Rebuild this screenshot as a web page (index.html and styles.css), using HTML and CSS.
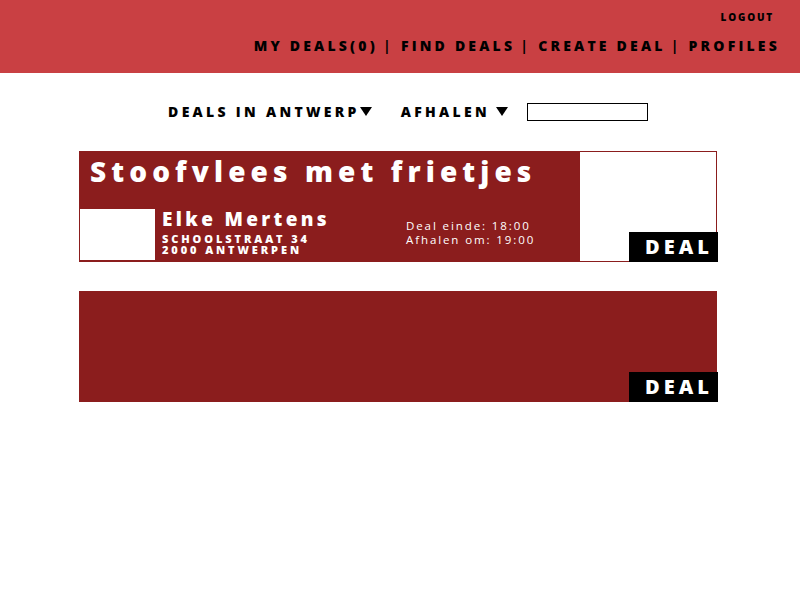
FILE: index.html
```html
<!DOCTYPE html>
<html>
<head>
<meta charset="utf-8">
<link rel="stylesheet" href="styles.css">
</head>
<body>
<header class="topbar">
  <div class="logout">LOGOUT</div>
  <nav class="mainnav">
    <span>MY DEALS(0)</span><span class="sep">|</span><span>FIND DEALS</span><span class="sep">|</span><span>CREATE DEAL</span><span class="sep">|</span><span>PROFILES</span>
  </nav>
</header>
<main class="content">
  <div class="filters">
    <div class="filter">DEALS IN ANTWERP<span class="tri"></span></div>
    <div class="filter f2">AFHALEN<span class="tri tri-gap"></span></div>
    <input class="search" type="text">
  </div>
  <div class="card">
    <div class="card-main">
      <h1 class="title">Stoofvlees met frietjes</h1>
      <div class="card-bottom">
        <div class="avatar"></div>
        <div class="person">
          <div class="name">Elke Mertens</div>
          <div class="addr">SCHOOLSTRAAT 34</div>
          <div class="addr">2000 ANTWERPEN</div>
        </div>
        <div class="times">Deal einde: 18:00<br>Afhalen om: 19:00</div>
      </div>
    </div>
    <div class="card-img"></div>
    <div class="badge">DEAL</div>
  </div>
  <div class="card card-empty">
    <div class="badge">DEAL</div>
  </div>
</main>
</body>
</html>
```
FILE: styles.css
```css
* { box-sizing: border-box; }
body { margin: 0; font-family: "Open Sans", "Lato", sans-serif; background: #fff; color: #000; }
.topbar { background: #c94043; height: 73px; padding: 11px 20px 0 0; display: flex; flex-direction: column; align-items: flex-end; }
.logout { font-size: 10px; font-weight: 800; letter-spacing: 1.8px; margin-right: 6px; line-height: 12px; }
.mainnav { margin-top: 14px; font-size: 14px; font-weight: 800; letter-spacing: 3.2px; line-height: 18px; display: flex; }
.mainnav .sep { margin: 0 7px 0 5px; font-weight: 700; }
.content { width: 638px; margin: 0 0 0 79px; padding-top: 29px; }
.filters { display: flex; justify-content: center; align-items: center; height: 19px; padding-left: 20px; }
.filter { font-size: 14px; font-weight: 800; letter-spacing: 3.3px; display: flex; align-items: center; line-height: 18px; }
.f2 { margin-left: 29px; }
.tri { display: inline-block; width: 0; height: 0; border-left: 6.5px solid transparent; border-right: 6.5px solid transparent; border-top: 9px solid #000; }
.tri-gap { margin-left: 6px; }
.search { width: 121px; height: 18px; border: 1px solid #000; margin-left: 19px; padding: 0; }
.card { position: relative; margin-top: 30px; height: 111px; border: 1px solid #8b1d1d; display: flex; background: #fff; }
.card-main { width: 500px; background: #8b1d1d; display: flex; flex-direction: column; }
.title { margin: 0; color: #fff; font-size: 28px; font-weight: 800; letter-spacing: 5.1px; padding: 0 0 0 10px; height: 57px; line-height: 38px; }
.card-bottom { display: flex; flex: 1; }
.avatar { width: 75px; height: 51px; background: #fff; }
.person { color: #fff; padding: 0 0 0 7px; width: 251px; }
.name { font-size: 19px; font-weight: 800; letter-spacing: 3.35px; line-height: 22px; margin-top: -1px; }
.addr { font-size: 11px; font-weight: 800; letter-spacing: 2.9px; line-height: 11px; }
.name + .addr { margin-top: 3px; }
.times { color: #fff; font-size: 11.5px; letter-spacing: 1.9px; line-height: 14px; padding-top: 10px; }
.card-img { flex: 1; background: #fff; }
.card-empty { background: #8b1d1d; margin-top: 29px; border: none; height: 111px; }
.badge { position: absolute; right: -2px; bottom: -1px; width: 89px; height: 30px; background: #000; color: #fff; font-size: 20px; font-weight: 800; letter-spacing: 4px; line-height: 30px; padding-left: 16px; }
.card-empty .badge { bottom: 0; right: -1px; }
```
